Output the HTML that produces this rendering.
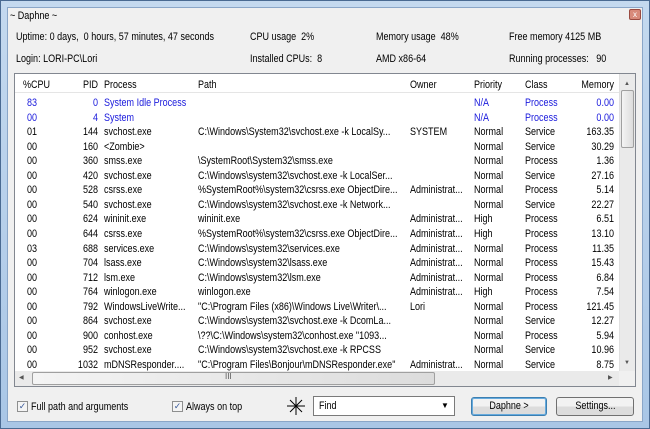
<!DOCTYPE html>
<html><head><style>
*{margin:0;padding:0;box-sizing:border-box}
body{width:650px;height:429px;overflow:hidden;background:#a7c3e2;font-family:"Liberation Sans",sans-serif;font-size:11px;color:#000;position:relative}
.frame{position:absolute;left:0;top:0;width:650px;height:429px;border:1px solid #4a6a92;background:linear-gradient(#c4d9ef,#a9c6e6)}
.win{position:absolute;left:7px;top:7px;width:636px;height:415px;background:#f0f0f0;border:1px solid #8aa6c8}
.t{position:absolute;white-space:nowrap;transform:scaleX(.82);transform-origin:0 0}
.close{position:absolute;left:629px;top:9px;width:12px;height:11px;background:#d88a7a;border:1px solid #9a4a40;border-radius:2px;color:#fff;font-size:8px;line-height:9px;text-align:center}
.list{position:absolute;left:14px;top:73px;width:622px;height:314px;background:#fff;border:1px solid #828790}
.hdr{position:absolute;left:0;top:0;width:604px;height:19px;border-bottom:1px solid #e5e5e5;background:#fff}
.row{position:absolute;left:0;width:604px;height:14px}
.c{position:absolute;white-space:nowrap;transform:scaleX(.82);transform-origin:0 0}
.r{transform-origin:100% 0;text-align:right}
.b{color:#1a1adc}
.vs{position:absolute;left:604px;top:0;width:16px;height:297px;background:#eaeaea;border-left:1px solid #e0e0e0}
.hs{position:absolute;left:0;top:297px;width:604px;height:15px;background:#eaeaea}
.thumb{position:absolute;background:linear-gradient(90deg,#f4f4f4,#dcdcdc);border:1px solid #a0a0a0;border-radius:2px}
.btn{position:absolute;height:19px;border:1px solid #707070;border-radius:3px;background:linear-gradient(#f2f2f2 50%,#dcdcdc 50%);text-align:center;line-height:17px}
.btn span{display:inline-block;transform:scaleX(.82)}
.cb{position:absolute;width:11px;height:11px;border:1px solid #8e8f8f;background:#f4f4f4;font-size:9px;line-height:9px;text-align:center;color:#3a5a9a}
</style></head><body>
<div class="frame"></div>
<div class="win"></div>
<div class="t" style="left:10px;top:10px">~ Daphne ~</div>
<div class="close">x</div>
<div class="t" style="left:16px;top:31px">Uptime: 0 days,&nbsp; 0 hours, 57 minutes, 47 seconds</div>
<div class="t" style="left:250px;top:31px">CPU usage&nbsp; 2%</div>
<div class="t" style="left:376px;top:31px">Memory usage&nbsp; 48%</div>
<div class="t" style="left:509px;top:31px">Free memory 4125 MB</div>
<div class="t" style="left:16px;top:53px">Login: LORI-PC\Lori</div>
<div class="t" style="left:250px;top:53px">Installed CPUs:&nbsp; 8</div>
<div class="t" style="left:376px;top:53px">AMD x86-64</div>
<div class="t" style="left:509px;top:53px">Running processes:&nbsp;&nbsp; 90</div>
<div class="list">
<div class="hdr">
<div class="c" style="left:8px;top:5px">%CPU</div>
<div class="c r" style="left:33px;top:5px;width:50px">PID</div>
<div class="c" style="left:89px;top:5px">Process</div>
<div class="c" style="left:183px;top:5px">Path</div>
<div class="c" style="left:395px;top:5px">Owner</div>
<div class="c" style="left:459px;top:5px">Priority</div>
<div class="c" style="left:510px;top:5px">Class</div>
<div class="c r" style="left:530px;top:5px;width:69px">Memory</div>
</div>
<div id="rows"></div>
<div class="vs"><div style="position:absolute;left:4px;top:7px;font-size:6px;color:#555">▲</div><div class="thumb" style="left:1px;top:16px;width:13px;height:58px"></div><div style="position:absolute;left:4px;top:286px;font-size:6px;color:#555">▼</div></div>
<div class="hs"><div style="position:absolute;left:4px;top:3px;font-size:6px;color:#555">◀</div><div class="thumb" style="left:17px;top:1px;width:403px;height:13px"></div><div style="position:absolute;left:210px;top:1px;font-size:8px;color:#555">III</div><div style="position:absolute;left:593px;top:3px;font-size:6px;color:#555">▶</div></div>
<div style="position:absolute;left:604px;top:297px;width:16px;height:15px;background:#f0f0f0"></div>
</div>
<div class="cb" style="left:17px;top:401px">✓</div>
<div class="t" style="left:31px;top:401px">Full path and arguments</div>
<div class="cb" style="left:172px;top:401px">✓</div>
<div class="t" style="left:186px;top:401px">Always on top</div>
<svg style="position:absolute;left:286px;top:396px" width="20" height="20"><g stroke="#000" stroke-width="1"><line x1="10" y1="1" x2="10" y2="19"/><line x1="1" y1="10" x2="19" y2="10"/><line x1="4" y1="4" x2="16" y2="16"/><line x1="16" y1="4" x2="4" y2="16"/></g></svg>
<div style="position:absolute;left:313px;top:396px;width:142px;height:20px;border:1px solid #7a7a7a;background:#fff"></div>
<div class="t" style="left:319px;top:400px">Find</div>
<div style="position:absolute;left:441px;top:401px;font-size:8px">▼</div>
<div class="btn" style="left:471px;top:397px;width:76px;border-color:#3c7fb1;box-shadow:inset 0 0 0 1px #6ad"><span>Daphne &gt;</span></div>
<div class="btn" style="left:556px;top:397px;width:78px"><span>Settings...</span></div>
<script>
var d=[["83","0","System Idle Process","","","N/A","Process","0.00",1],["00","4","System","","","N/A","Process","0.00",1],
["01","144","svchost.exe","C:\\Windows\\System32\\svchost.exe -k LocalSy...","SYSTEM","Normal","Service","163.35"],
["00","160","&lt;Zombie&gt;","","","Normal","Service","30.29"],
["00","360","smss.exe","\\SystemRoot\\System32\\smss.exe","","Normal","Process","1.36"],
["00","420","svchost.exe","C:\\Windows\\system32\\svchost.exe -k LocalSer...","","Normal","Service","27.16"],
["00","528","csrss.exe","%SystemRoot%\\system32\\csrss.exe ObjectDire...","Administrat...","Normal","Process","5.14"],
["00","540","svchost.exe","C:\\Windows\\system32\\svchost.exe -k Network...","","Normal","Service","22.27"],
["00","624","wininit.exe","wininit.exe","Administrat...","High","Process","6.51"],
["00","644","csrss.exe","%SystemRoot%\\system32\\csrss.exe ObjectDire...","Administrat...","High","Process","13.10"],
["03","688","services.exe","C:\\Windows\\system32\\services.exe","Administrat...","Normal","Process","11.35"],
["00","704","lsass.exe","C:\\Windows\\system32\\lsass.exe","Administrat...","Normal","Process","15.43"],
["00","712","lsm.exe","C:\\Windows\\system32\\lsm.exe","Administrat...","Normal","Process","6.84"],
["00","764","winlogon.exe","winlogon.exe","Administrat...","High","Process","7.54"],
["00","792","WindowsLiveWrite...","\"C:\\Program Files (x86)\\Windows Live\\Writer\\...","Lori","Normal","Process","121.45"],
["00","864","svchost.exe","C:\\Windows\\system32\\svchost.exe -k DcomLa...","","Normal","Service","12.27"],
["00","900","conhost.exe","\\??\\C:\\Windows\\system32\\conhost.exe \"1093...","","Normal","Process","5.94"],
["00","952","svchost.exe","C:\\Windows\\system32\\svchost.exe -k RPCSS","","Normal","Service","10.96"],
["00","1032","mDNSResponder....","\"C:\\Program Files\\Bonjour\\mDNSResponder.exe\"","Administrat...","Normal","Service","8.75"]];
var h="";d.forEach(function(r,i){var y=23+i*14.55;h+='<div class="row'+(r[8]?' b':'')+'" style="top:'+y+'px">'+
'<div class="c" style="left:12px">'+r[0]+'</div><div class="c r" style="left:33px;width:50px">'+r[1]+'</div>'+
'<div class="c" style="left:89px">'+r[2]+'</div><div class="c" style="left:183px">'+r[3]+'</div>'+
'<div class="c" style="left:395px">'+r[4]+'</div><div class="c" style="left:459px">'+r[5]+'</div><div class="c" style="left:510px">'+r[6]+'</div>'+
'<div class="c r" style="left:530px;width:69px">'+r[7]+'</div></div>';});
document.getElementById("rows").innerHTML=h;
</script>
</body></html>
